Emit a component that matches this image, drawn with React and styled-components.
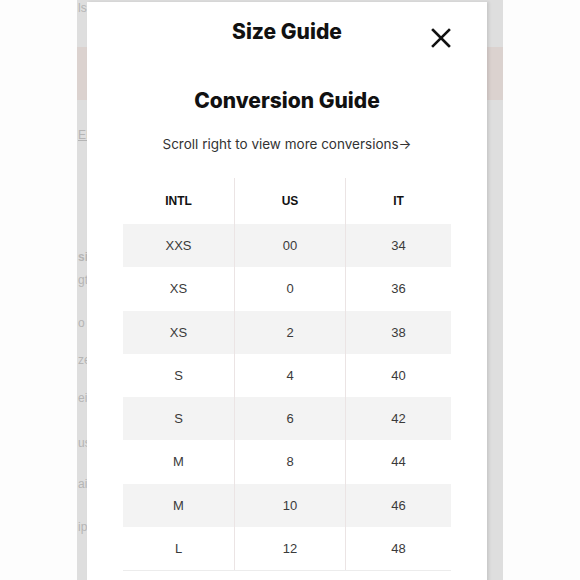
import React from 'react';
import styled, { createGlobalStyle } from 'styled-components';

const GlobalStyle = createGlobalStyle`
  html, body {
    margin: 0;
    padding: 0;
    background: #fdfdfd;
  }
`;

const Page = styled.div`
  display: flex;
  width: 580px;
  height: 580px;
  overflow: hidden;
  background: #fdfdfd;
`;

const Screen = styled.div`
  position: relative;
  margin-left: 77px;
  width: 426px;
  height: 580px;
  overflow: hidden;
  background: #dedede;
`;

const Backdrop = styled.div`
  display: flex;
  flex-direction: column;
  font-family: "Liberation Sans", Arial, sans-serif;
  font-size: 12px;
  line-height: 14px;
  color: #b5b5b5;
`;

const Fragment = styled.div`
  margin-top: ${p => p.$top}px;
  margin-left: 1px;
  white-space: nowrap;
  font-weight: ${p => (p.$bold ? 700 : 400)};
  text-decoration: ${p => (p.$underline ? 'underline' : 'none')};
`;

const Banner = styled.div`
  margin-top: 32px;
  height: 53px;
  background: #dbd2cf;
`;

const Modal = styled.div`
  position: absolute;
  top: 2px;
  left: 10px;
  width: 400px;
  height: 620px;
  background: #ffffff;
  box-shadow: 2px 0 3px rgba(0, 0, 0, 0.1);
  display: flex;
  flex-direction: column;
  align-items: center;
`;

const Header = styled.div`
  display: grid;
  grid-template-columns: 1fr auto 1fr;
  align-items: start;
  width: 100%;
  box-sizing: border-box;
  padding: 18px 32px 0;
`;

const Title = styled.h2`
  grid-column: 2;
  margin: 0;
  font-family: Inter, "Liberation Sans", sans-serif;
  font-weight: 800;
  font-size: 21px;
  line-height: 24px;
  color: #111;
`;

const CloseButton = styled.button`
  grid-column: 3;
  justify-self: end;
  margin: 6px 0 -6px;
  width: 28px;
  height: 24px;
  padding: 0;
  border: none;
  background: none;
  display: flex;
  align-items: center;
  justify-content: center;
  cursor: pointer;
`;

const Subtitle = styled.h3`
  margin: 45px 0 0;
  font-family: Inter, "Liberation Sans", sans-serif;
  font-weight: 800;
  font-size: 21px;
  line-height: 24px;
  color: #111;
`;

const Hint = styled.p`
  margin: 22px 0 0;
  font-family: Inter, "Liberation Sans", sans-serif;
  font-size: 13.5px;
  line-height: 18px;
  color: #333;
`;

const Table = styled.div`
  margin-top: 25px;
  width: 328px;
  display: flex;
  flex-direction: column;
  border-bottom: 1px solid #ececec;
`;

const Row = styled.div`
  display: grid;
  grid-template-columns: 111px 111px 106px;
  height: ${p => (p.$head ? 46 : 43.25)}px;
  background: ${p => (p.$shaded ? '#f3f3f3' : 'transparent')};
`;

const Cell = styled.div`
  display: flex;
  align-items: center;
  justify-content: center;
  font-family: "Liberation Sans", Arial, sans-serif;
  font-size: ${p => (p.$head ? 12 : 13)}px;
  font-weight: ${p => (p.$head ? 700 : 400)};
  color: ${p => (p.$head ? '#111' : '#3a3a3a')};
  & + & {
    border-left: 1px solid #ebe4e4;
  }
`;

const sizes = [
  ['XXS', '00', '34'],
  ['XS', '0', '36'],
  ['XS', '2', '38'],
  ['S', '4', '40'],
  ['S', '6', '42'],
  ['M', '8', '44'],
  ['M', '10', '46'],
  ['L', '12', '48'],
];

// what shows of the page behind the modal, in the strip at its left
const backdropLines = [
  { text: 'EE', top: 28, underline: true },
  { text: 'si', top: 108, bold: true },
  { text: 'gth', top: 9 },
  { text: 'o', top: 29 },
  { text: 'ze', top: 23 },
  { text: 'ei', top: 24 },
  { text: 'us', top: 31 },
  { text: 'ai', top: 27 },
  { text: 'ip', top: 29 },
];

function CloseIcon() {
  return (
    <svg width="20" height="20" viewBox="0 0 20 20">
      <path d="M2 2 L18 18 M18 2 L2 18" stroke="#111" strokeWidth="2.6" strokeLinecap="square" />
    </svg>
  );
}

export default function App() {
  return (
    <>
      <GlobalStyle />
      <Page>
        <Screen>
          <Backdrop>
            <Fragment $top={1}>ls</Fragment>
            <Banner />
            {backdropLines.map((l, i) => (
              <Fragment key={i} $top={l.top} $bold={l.bold} $underline={l.underline}>
                {l.text}
              </Fragment>
            ))}
          </Backdrop>
          <Modal>
            <Header>
              <Title>Size Guide</Title>
              <CloseButton aria-label="Close">
                <CloseIcon />
              </CloseButton>
            </Header>
            <Subtitle>Conversion Guide</Subtitle>
            <Hint>Scroll right to view more conversions→</Hint>
            <Table>
              <Row $head>
                <Cell $head>INTL</Cell>
                <Cell $head>US</Cell>
                <Cell $head>IT</Cell>
              </Row>
              {sizes.map((r, i) => (
                <Row key={i} $shaded={i % 2 === 0}>
                  {r.map((v, j) => (
                    <Cell key={j}>{v}</Cell>
                  ))}
                </Row>
              ))}
            </Table>
          </Modal>
        </Screen>
      </Page>
    </>
  );
}
